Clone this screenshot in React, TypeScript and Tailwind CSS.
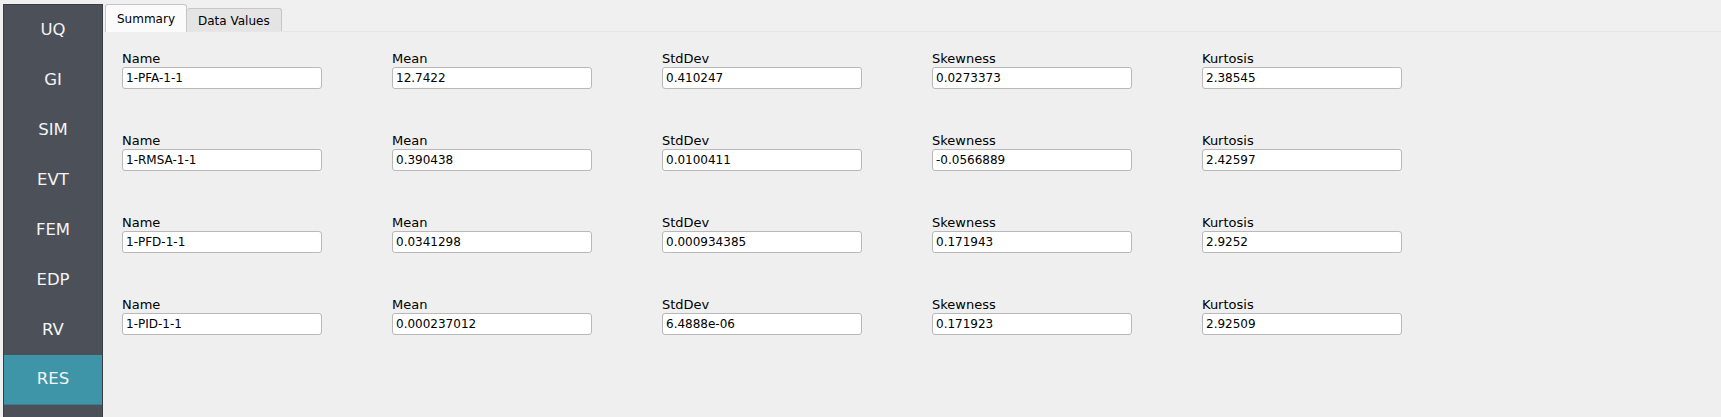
import React, { useState } from 'react';

type Row = { name: string; mean: string; stdDev: string; skewness: string; kurtosis: string };

const rows: Row[] = [
  { name: '1-PFA-1-1', mean: '12.7422', stdDev: '0.410247', skewness: '0.0273373', kurtosis: '2.38545' },
  { name: '1-RMSA-1-1', mean: '0.390438', stdDev: '0.0100411', skewness: '-0.0566889', kurtosis: '2.42597' },
  { name: '1-PFD-1-1', mean: '0.0341298', stdDev: '0.000934385', skewness: '0.171943', kurtosis: '2.9252' },
  { name: '1-PID-1-1', mean: '0.000237012', stdDev: '6.4888e-06', skewness: '0.171923', kurtosis: '2.92509' },
];

const navItems = ['UQ', 'GI', 'SIM', 'EVT', 'FEM', 'EDP', 'RV', 'RES'];

const Field: React.FC<{ label: string; value: string }> = ({ label, value }) => (
  <div className="flex flex-col w-[200px]">
    <label className="block text-[13px] leading-[17px] h-[17px] text-black">{label}</label>
    <input
      type="text" readOnly value={value}
      className="block w-[200px] h-[22px] px-[3px] bg-white border border-[#b9b9b9] rounded-[3px] text-[12px] text-black outline-none"
    />
  </div>
);

const App: React.FC = () => {
  const [active, setActive] = useState('RES');
  const [tab, setTab] = useState('Summary');

  return (
    <div
      className="w-full h-[417px] bg-[#f0f0f0] flex overflow-hidden"
      style={{ fontFamily: '"DejaVu Sans", Verdana, sans-serif' }}
    >
      <div className="ml-[3px] mt-[4px] w-[100px] h-[413px] bg-[#4c5059] border border-[#3a3d43] border-b-0 flex flex-col">
        {navItems.map(item => (
          <button
            key={item} onClick={() => setActive(item)}
            className={`h-[50px] w-full flex items-center justify-center text-[16.5px] text-[#f4f4f4] ${active === item ? 'bg-[#3f95a8] border-b border-[#3a7f8f]' : ''}`}
          >
            {item}
          </button>
        ))}
      </div>

      <div className="flex-1 flex flex-col ml-[1px] mt-[4px]">
        <div className="flex items-end h-[27px] pl-[1px]">
          <button
            onClick={() => setTab('Summary')}
            className={`h-[28px] -mb-[1px] px-[11px] text-[12px] text-black border border-[#c6c6c6] border-b-0 rounded-t-[3px] relative z-10 ${tab === 'Summary' ? 'bg-[#fbfbfb]' : 'bg-[#e4e4e4] h-[24px]'}`}
          >
            Summary
          </button>
          <button
            onClick={() => setTab('Data Values')}
            className={`-mb-[1px] px-[11px] text-[12px] text-black border border-[#c6c6c6] border-b-0 border-l-0 rounded-t-[3px] ${tab === 'Data Values' ? 'bg-[#fbfbfb] h-[28px] relative z-10' : 'bg-[#e4e4e4] h-[24px]'}`}
          >
            Data Values
          </button>
        </div>
        <div className="flex-1 bg-[#efefef] border-t border-[#e6e6e6] pl-[18px] pt-[18px]">
          <div className="flex flex-col gap-[43px]">
            {rows.map(r => (
              <div key={r.name} className="grid grid-cols-[270px_270px_270px_270px_200px]">
                <Field label="Name" value={r.name} />
                <Field label="Mean" value={r.mean} />
                <Field label="StdDev" value={r.stdDev} />
                <Field label="Skewness" value={r.skewness} />
                <Field label="Kurtosis" value={r.kurtosis} />
              </div>
            ))}
          </div>
        </div>
      </div>
    </div>
  );
};

export default App;
